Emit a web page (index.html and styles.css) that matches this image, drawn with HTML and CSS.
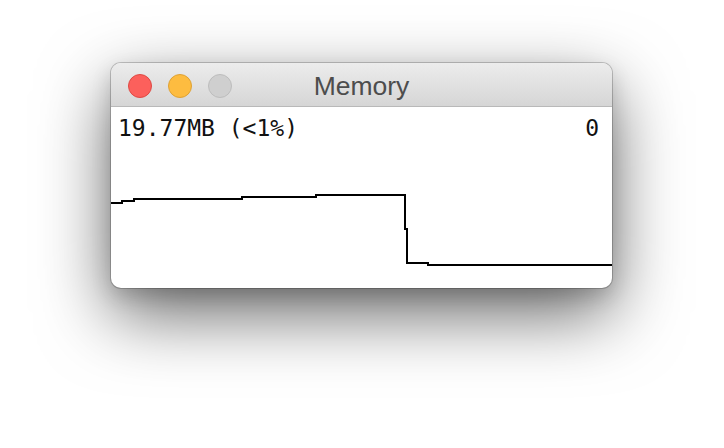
FILE: index.html
```html
<!DOCTYPE html>
<html>
<head>
<meta charset="utf-8">
<link rel="stylesheet" href="styles.css">
</head>
<body>
<div class="stage">
  <div class="window">
    <div class="titlebar">
      <div class="lights">
        <span class="light red"></span>
        <span class="light yellow"></span>
        <span class="light grey"></span>
      </div>
      <div class="title">Memory</div>
    </div>
    <div class="content">
      <div class="stats">
        <span>19.77MB (&lt;1%)</span>
        <span>0</span>
      </div>
      <svg class="graph" width="501" height="181" viewBox="0 0 501 181" shape-rendering="crispEdges">
        <polyline fill="none" stroke="#000" stroke-width="2"
          points="0,96 11,96 11,94 23,94 23,92 131,92 131,90 205,90 205,88 294,88 294,122 296,122 296,156 317,156 317,158 501,158"/>
      </svg>
    </div>
  </div>
</div>
</body>
</html>
```
FILE: styles.css
```css
html, body {
  margin: 0;
  padding: 0;
  background: #fff;
}
.stage {
  width: 724px;
  height: 448px;
  padding: 63px 0 0 111px;
  box-sizing: border-box;
}
.window {
  width: 501px;
  height: 225px;
  border-radius: 10px;
  background: #fff;
  overflow: hidden;
  box-shadow: 0 0 0 1px rgba(0,0,0,0.2), 0 26px 70px rgba(0,0,0,0.6), 0 8px 20px rgba(0,0,0,0.15);
  display: flex;
  flex-direction: column;
}
.titlebar {
  height: 43px;
  flex: none;
  background: linear-gradient(#ececec, #d6d6d6);
  border-bottom: 1px solid #b9b9b9;
  display: flex;
  align-items: center;
  position: relative;
}
.lights {
  display: flex;
  gap: 16px;
  padding-left: 17px;
  padding-top: 2px;
}
.light {
  width: 24px;
  height: 24px;
  border-radius: 50%;
  box-sizing: border-box;
}
.red { background: #fc605c; border: 1px solid #de4a44; }
.yellow { background: #fdbc40; border: 1px solid #dea235; }
.grey { background: #cfcfcf; border: 1px solid #bdbdbd; }
.title {
  position: absolute;
  left: 0;
  right: 0;
  top: 0;
  bottom: 0;
  display: flex;
  align-items: center;
  justify-content: center;
  font-family: "Liberation Sans", Arial, sans-serif;
  font-size: 26.5px;
  color: #4d4d4d;
  padding-top: 3px;
}
.content {
  flex: 1;
  position: relative;
}
.stats {
  display: flex;
  justify-content: space-between;
  padding: 5px 13px 0 7px;
  font-family: "DejaVu Sans Mono", monospace;
  font-size: 23px;
  line-height: 32px;
  color: #111;
}
.graph {
  position: absolute;
  left: 0;
  top: 0;
  display: block;
}
```
